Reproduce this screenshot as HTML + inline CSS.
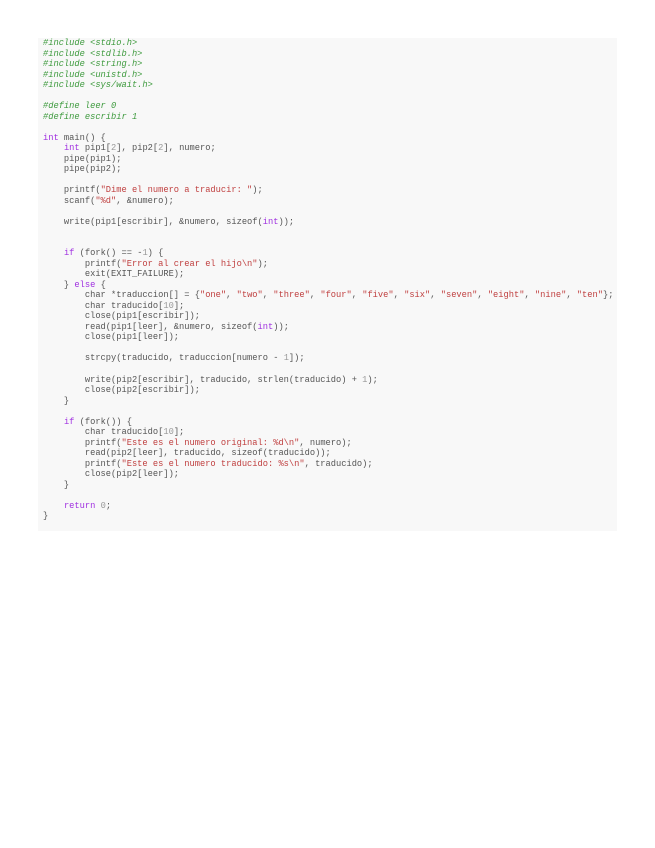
<!DOCTYPE html>
<html><head><meta charset="utf-8"><style>
html,body{margin:0;padding:0;background:#fff;width:655px;height:848px;overflow:hidden}
pre{position:absolute;left:38px;top:38px;width:579px;height:493px;margin:0;box-sizing:border-box;padding:0 0 0 5px;background:#f8f8f8;font-family:"Liberation Mono",monospace;font-size:8.73px;line-height:10.52px;color:#555}
.c{color:#3d9a3d;font-style:italic}
.k{color:#a030e0}
.s{color:#c04040}
.n{color:#999}
</style></head><body><pre><span class="c">#include &lt;stdio.h&gt;
#include &lt;stdlib.h&gt;
#include &lt;string.h&gt;
#include &lt;unistd.h&gt;
#include &lt;sys/wait.h&gt;

#define leer 0
#define escribir 1</span>

<span class="k">int</span> main() {
    <span class="k">int</span> pip1[<span class="n">2</span>], pip2[<span class="n">2</span>], numero;
    pipe(pip1);
    pipe(pip2);

    printf(<span class="s">"Dime el numero a traducir: "</span>);
    scanf(<span class="s">"%d"</span>, &amp;numero);

    write(pip1[escribir], &amp;numero, sizeof(<span class="k">int</span>));


    <span class="k">if</span> (fork() == -<span class="n">1</span>) {
        printf(<span class="s">"Error al crear el hijo\n"</span>);
        exit(EXIT_FAILURE);
    } <span class="k">else</span> {
        char *traduccion[] = {<span class="s">"one"</span>, <span class="s">"two"</span>, <span class="s">"three"</span>, <span class="s">"four"</span>, <span class="s">"five"</span>, <span class="s">"six"</span>, <span class="s">"seven"</span>, <span class="s">"eight"</span>, <span class="s">"nine"</span>, <span class="s">"ten"</span>};
        char traducido[<span class="n">10</span>];
        close(pip1[escribir]);
        read(pip1[leer], &amp;numero, sizeof(<span class="k">int</span>));
        close(pip1[leer]);

        strcpy(traducido, traduccion[numero - <span class="n">1</span>]);

        write(pip2[escribir], traducido, strlen(traducido) + <span class="n">1</span>);
        close(pip2[escribir]);
    }

    <span class="k">if</span> (fork()) {
        char traducido[<span class="n">10</span>];
        printf(<span class="s">"Este es el numero original: %d\n"</span>, numero);
        read(pip2[leer], traducido, sizeof(traducido));
        printf(<span class="s">"Este es el numero traducido: %s\n"</span>, traducido);
        close(pip2[leer]);
    }

    <span class="k">return</span> <span class="n">0</span>;
}</pre></body></html>
